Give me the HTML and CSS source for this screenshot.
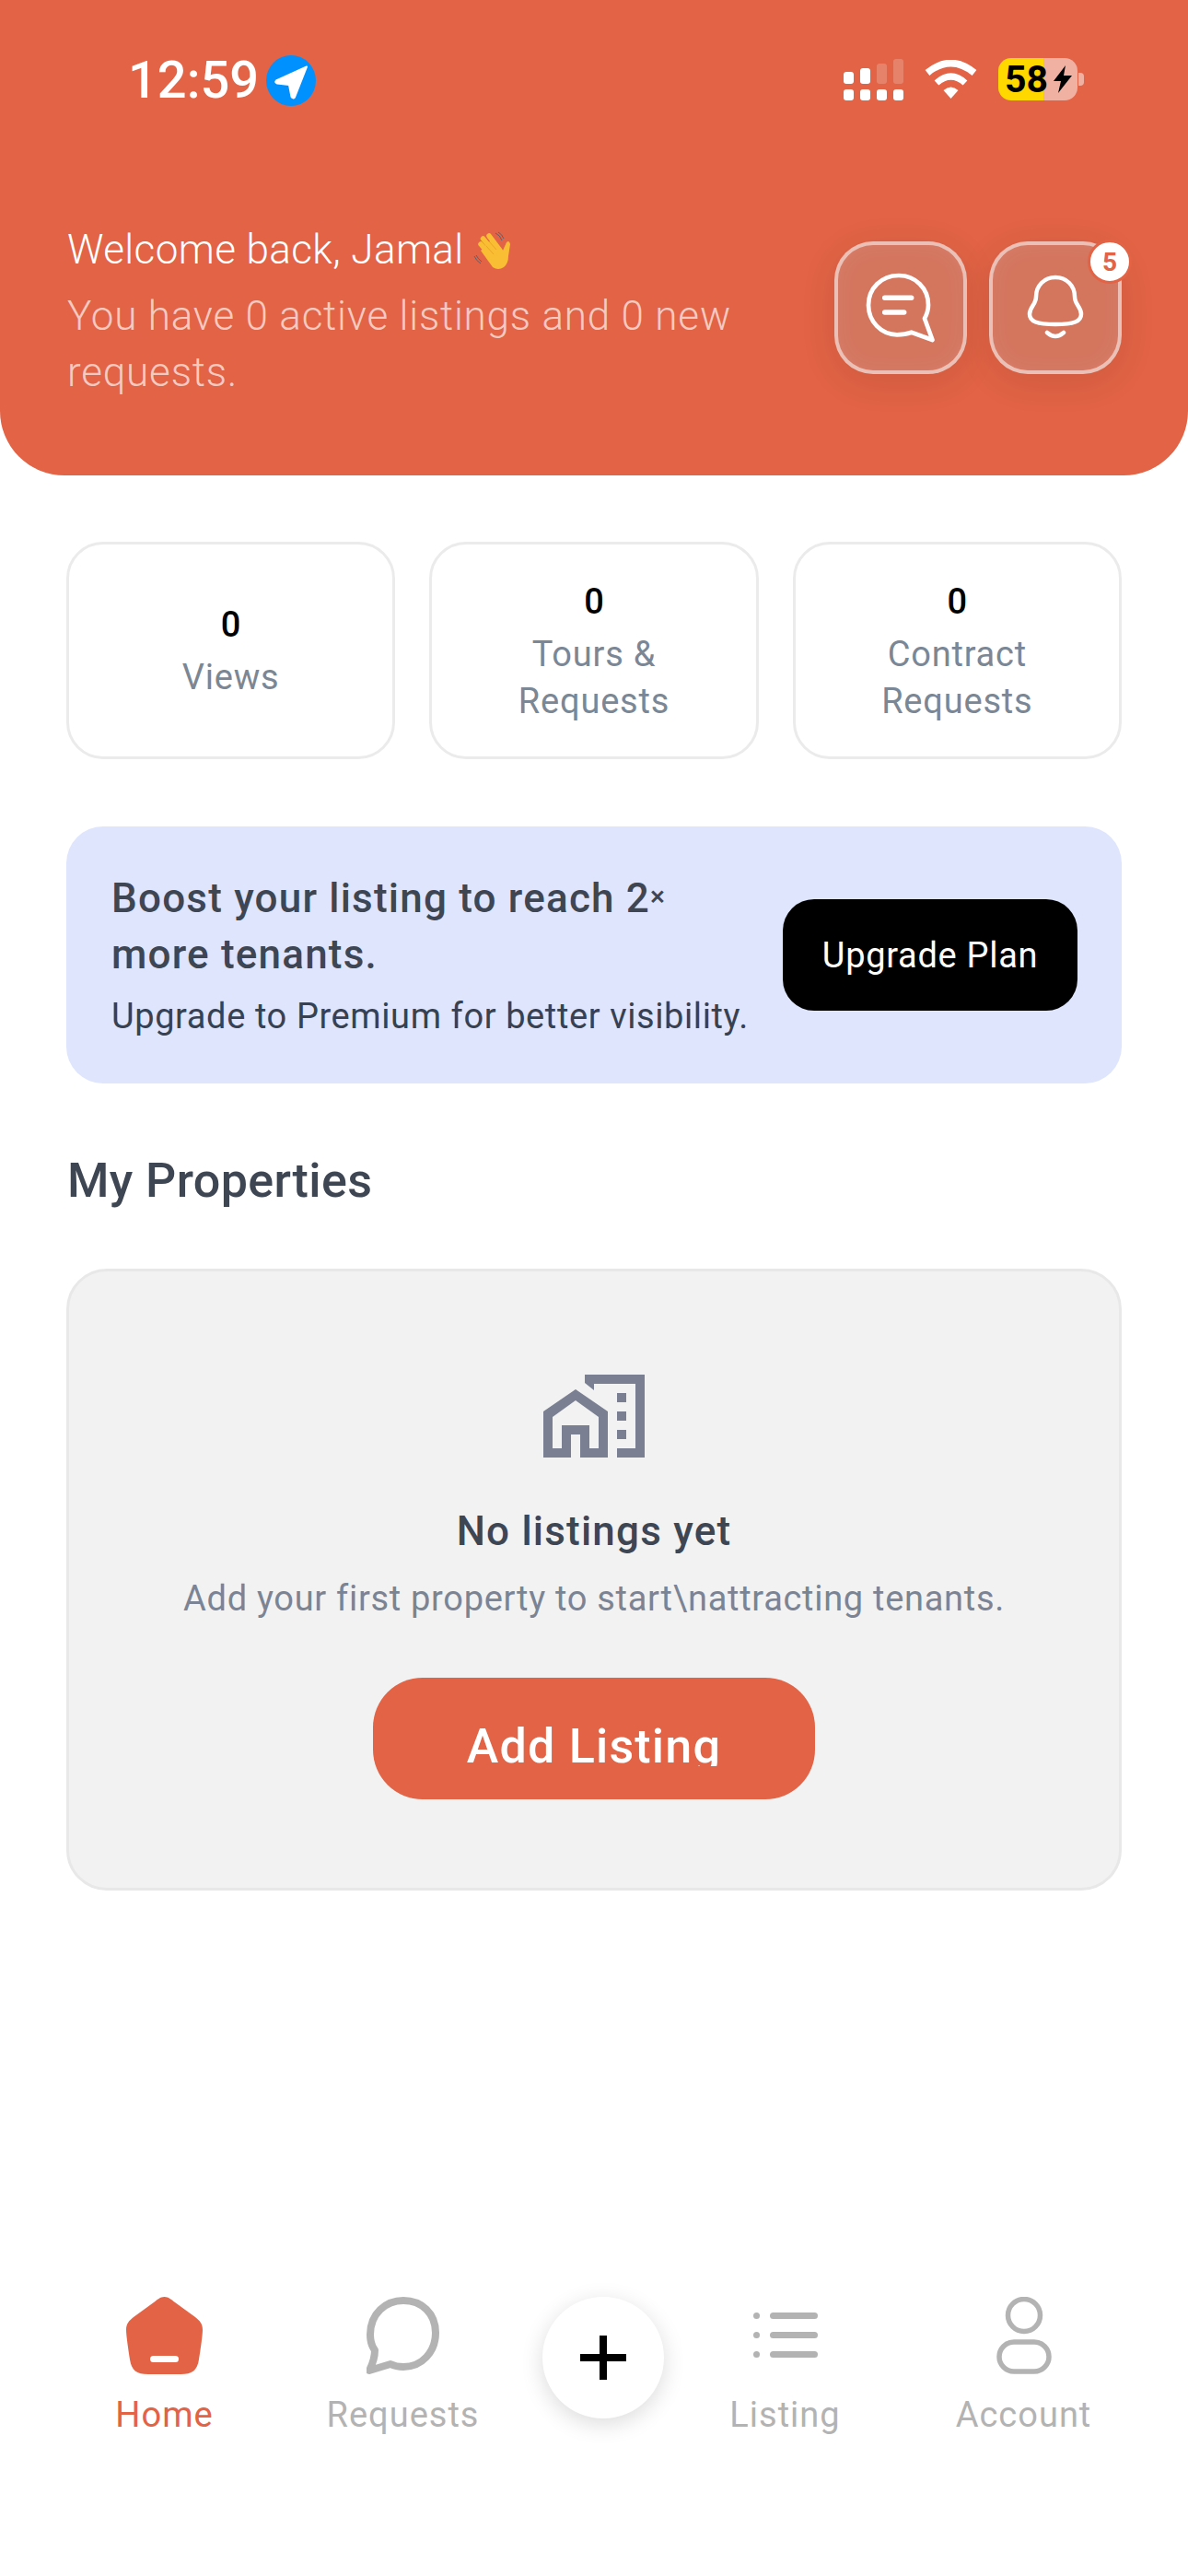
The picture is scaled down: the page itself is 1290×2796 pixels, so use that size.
FILE: index.html
```html
<!DOCTYPE html>
<html>
  <head>
    <title>Home</title>
    <link rel="stylesheet" href="styles.css">
  </head>
  <body>
    <div class="page">
      <div class="header">
        <div class="statusbar">
          <div class="status-left">
            <span class="time">12:59</span>
            <span class="location">
              <svg viewBox="0 0 54 54" width="54" height="54"><path d="M44 11.5 L11 26.5 Q9 28.5 12 29.5 L25 31 L27.5 44 Q29 46.5 31 44.5 Z" fill="#fff" stroke="#fff" stroke-width="2" stroke-linejoin="round"/></svg>
            </span>
          </div>
          <div class="status-right">
            <div class="signal">
              <span class="dot"><i class="bar b1"></i><i class="pip"></i></span>
              <span class="dot"><i class="bar b2"></i><i class="pip"></i></span>
              <span class="dot"><i class="bar b3 dim"></i><i class="pip"></i></span>
              <span class="dot"><i class="bar b4 dim"></i><i class="pip"></i></span>
            </div>
            <svg class="wifi" viewBox="0 0 57 42" width="57" height="42">
              <path d="M3 14 Q28.500 -7 54 14" fill="none" stroke="#fff" stroke-width="7.500"/>
              <path d="M13 25 Q28.500 11 44 25" fill="none" stroke="#fff" stroke-width="7"/>
              <path d="M20.500 33 Q28.500 26 36.500 33 L28.500 42 Z" fill="#fff"/>
            </svg>
            <div class="battery">
              <div class="battery-body">
                <span class="battery-text">58</span>
                <svg class="bolt" viewBox="0 0 20 30" width="20" height="30"><path d="M13 0 L0 17 L8 17 L5 30 L20 11 L11 11 Z" fill="#000"/></svg>
              </div>
              <span class="battery-nub"></span>
            </div>
          </div>
        </div>

        <div class="hero">
          <div class="hero-text">
            <div class="welcome">
              Welcome back, Jamal
              <svg class="wave" viewBox="9 9 42 42" width="42" height="42">
                <path d="M33 11 Q38 13 40 19 M36 10 Q40 12 42 17 M10 36 Q12 41 17 44 M12 35 Q14 39 18 42" stroke="#5b6270" stroke-width="1" fill="none"/>
                <path d="M17 30 L30 48 Q36 52 42 48 Q47 44 47 36 L49 23 Q48 18 45 21 L41 30 L30 17 Z" fill="#F9BE33"/>
                <path d="M17 23 L30 38 M19.500 17 L33 33 M26 14 L38 30" stroke="#F9BE33" stroke-width="5.500" stroke-linecap="round" fill="none"/>
                <path d="M23 25 L31 34 M26 20 L34 29" stroke="#E6A021" stroke-width="0.800" fill="none"/>
              </svg>
            </div>
            <p class="welcome-sub">You have 0 active listings and 0 new requests.</p>
          </div>
          <div class="hero-actions">
            <button class="glass-btn">
              <svg viewBox="0 0 76 76" width="76" height="76" fill="none" stroke="#fff" stroke-width="4.700" stroke-linejoin="round" stroke-linecap="round">
                <path d="M36 3 C17 3 3 17 3 35.300 C3 53 17 67.300 34 67.300 C40 67.300 45 66.500 49.700 64.700 L72.500 73 L64 49.700 C66.500 45 68 40 68 35 C68 17 54 3 36 3 Z"/>
                <path d="M20.700 27.300 H49.700 M20.700 43 H41.700" stroke-width="5.500"/>
              </svg>
            </button>
            <button class="glass-btn">
              <svg viewBox="0 0 62 72" width="62" height="72" fill="none" stroke="#fff" stroke-width="4.500" stroke-linecap="round" stroke-linejoin="round">
                <path d="M31 3 C19 3 10 12 10 24 C10 33 3 35 3 43 C3 51 11 54 31 54 C51 54 59 51 59 43 C59 35 52 33 52 24 C52 12 43 3 31 3 Z"/>
                <path d="M22 63 Q31 71 40 63"/>
              </svg>
              <span class="badge">5</span>
            </button>
          </div>
        </div>
      </div>

      <div class="main">
        <div class="stats">
          <div class="stat-card">
            <div class="stat-num">0</div>
            <div class="stat-label">Views</div>
          </div>
          <div class="stat-card">
            <div class="stat-num">0</div>
            <div class="stat-label">Tours &amp; Requests</div>
          </div>
          <div class="stat-card">
            <div class="stat-num">0</div>
            <div class="stat-label">Contract Requests</div>
          </div>
        </div>

        <div class="promo">
          <div class="promo-text">
            <div class="promo-title">Boost your listing to reach 2<span class="times">×</span> more tenants.</div>
            <div class="promo-sub">Upgrade to Premium for better visibility.</div>
          </div>
          <button class="upgrade-btn">Upgrade Plan</button>
        </div>

        <h2 class="section-title">My Properties</h2>

        <div class="empty-card">
          <svg class="empty-icon" viewBox="0 0 110 90" width="110" height="90" fill="#7A8092">
            <path d="M45 0 H110 V90 H80 V80 H100 V10 H55 V17 L45 9 Z"/>
            <path fill-rule="evenodd" d="M0 40 L35 16 L70 40 V90 H40 V65 H30 V90 H0 Z M10 80 H20 V55 H50 V80 H60 V46 L35 28 L10 46 Z"/>
            <path d="M80 20 H90 V30 H80 Z M80 40 H90 V50 H80 Z M80 60 H90 V70 H80 Z"/>
          </svg>
          <div class="empty-title">No listings yet</div>
          <div class="empty-sub">Add your first property to start\nattracting tenants.</div>
          <button class="add-btn"><span class="add-label">Add Listing</span></button>
        </div>
      </div>

      <div class="tabbar">
        <div class="tab active">
          <svg viewBox="0 0 83 84" width="83" height="84">
            <path d="M41.500 0 C37 0 34 3 30 6 L8 22 C3 26 0 29 0 36 C0 42 3 62 4 68 C6 80 11 84 24 84 H59 C72 84 77 80 79 68 C80 62 83 42 83 36 C83 29 80 26 75 22 L53 6 C49 3 46 0 41.500 0 Z" fill="#E26345"/>
            <rect x="26" y="64" width="31" height="7" rx="3.500" fill="#fff"/>
          </svg>
          <span>Home</span>
        </div>
        <div class="tab">
          <svg viewBox="0 0 79 84" width="79" height="84" fill="none" stroke="#B3B3B3" stroke-width="8" stroke-linejoin="round" stroke-linecap="round">
            <path d="M40 4 C21 4 4 18 4 41 C4 48 6 54 9 58 C9 65 7 72 3 80 L26 73 C30 75 35 76 40 76 C60 76 75 60 75 39 C75 18 60 4 40 4 Z"/>
          </svg>
          <span>Requests</span>
        </div>
        <div class="tab-add">
          <button class="add-circle">
            <svg viewBox="0 0 50 48" width="50" height="48"><path d="M21 0 H29 V20 H50 V28 H29 V48 H21 V28 H0 V20 H21 Z" fill="#000"/></svg>
          </button>
        </div>
        <div class="tab">
          <svg viewBox="0 0 70 84" width="70" height="84" fill="#B3B3B3">
            <circle cx="3.500" cy="20.500" r="3.500"/><circle cx="3.500" cy="41.500" r="3.500"/><circle cx="3.500" cy="62.500" r="3.500"/>
            <rect x="18" y="17" width="52" height="7" rx="3.500"/><rect x="18" y="38" width="52" height="7" rx="3.500"/><rect x="18" y="59" width="52" height="7" rx="3.500"/>
          </svg>
          <span>Listing</span>
        </div>
        <div class="tab">
          <svg viewBox="0 0 60 84" width="60" height="84" fill="none" stroke="#B3B3B3" stroke-width="5.500">
            <ellipse cx="30" cy="20" rx="17.500" ry="17.500"/>
            <rect x="3" y="49" width="54" height="32" rx="16"/>
          </svg>
          <span>Account</span>
        </div>
      </div>
    </div>
  </body>
</html>
```

FILE: styles.css
```css
* {
  box-sizing: border-box;
}
body {
  margin: 0;
  background: #fff;
  font-family: "Roboto", "Liberation Sans", sans-serif;
}
button {
  font-family: inherit;
  border: none;
  padding: 0;
}
.page {
  width: 1290px;
  height: 2796px;
  display: flex;
  flex-direction: column;
  overflow: hidden;
}

/* header */
.header {
  height: 516px;
  background-color: #e26345;
  border-radius: 0 0 70px 70px;
  padding: 60px 72px 0 73px;
}
.statusbar {
  display: flex;
  justify-content: space-between;
  align-items: flex-start;
  height: 55px;
  margin-bottom: 126px;
}
.status-left {
  display: flex;
  align-items: center;
  gap: 8px;
  padding-left: 66px;
}
.time {
  font-size: 56px;
  line-height: 55px;
  font-weight: 500;
  color: #fff;
}
.location {
  width: 54px;
  height: 55px;
  border-radius: 50%;
  background-color: #0091ff;
  display: flex;
  align-items: center;
  justify-content: center;
}
.status-right {
  display: flex;
  align-items: center;
  gap: 23px;
  margin-right: 41px;
  margin-top: 3px;
}
.signal {
  display: flex;
  gap: 7px;
  align-items: flex-end;
  height: 46px;
}
.dot {
  width: 11px;
  display: flex;
  flex-direction: column;
  gap: 6px;
}
.dot i {
  display: block;
  background: #fff;
  border-radius: 3px;
}
.pip {
  height: 12px;
}
.b1 {
  height: 13px;
}
.b2 {
  height: 17px;
}
.b3 {
  height: 22px;
}
.b4 {
  height: 27px;
}
.dot i.dim {
  background: rgba(255, 255, 255, 0.2);
}
.battery {
  display: flex;
  align-items: center;
  gap: 1px;
}
.battery-body {
  width: 86px;
  height: 46px;
  border-radius: 14px;
  background: linear-gradient(to right, #ffd800 0, #ffd800 49px, rgba(255, 255, 255, 0.5) 49px);
  display: flex;
  align-items: center;
  padding-left: 7px;
}
.battery-text {
  font-size: 41px;
  font-weight: 700;
  color: #000;
  line-height: 46px;
}
.bolt {
  margin-left: 6px;
}
.battery-nub {
  width: 6px;
  height: 14px;
  background: rgba(255, 255, 255, 0.5);
  border-radius: 0 4px 4px 0;
}
.hero {
  display: flex;
  justify-content: space-between;
}
.hero-text {
  width: 760px;
}
.welcome {
  font-size: 44px;
  line-height: 61px;
  font-weight: 300;
  letter-spacing: 0.4px;
  color: #fff;
  display: flex;
  align-items: center;
  gap: 10px;
}
.welcome-sub {
  margin: 11px 0 0;
  font-size: 44px;
  line-height: 61px;
  font-weight: 300;
  letter-spacing: 0.8px;
  color: rgba(255, 255, 255, 0.68);
}
.hero-actions {
  display: flex;
  gap: 24px;
  margin-top: 21px;
}
.glass-btn {
  position: relative;
  width: 144px;
  height: 144px;
  border-radius: 42px;
  border: 4px solid rgba(255, 255, 255, 0.55);
  background: rgba(170, 170, 170, 0.25);
  box-shadow: 0 8px 40px rgba(0, 0, 0, 0.09), inset 0 0 24px rgba(255, 255, 255, 0.08);
  display: flex;
  align-items: center;
  justify-content: center;
}
.badge {
  position: absolute;
  top: -6px;
  right: -15px;
  width: 48px;
  height: 48px;
  border-radius: 50%;
  background: #fff;
  border: 3px solid #e26345;
  color: #e26345;
  font-size: 28px;
  font-weight: 700;
  display: flex;
  align-items: center;
  justify-content: center;
}

/* main */
.main {
  flex: 1;
  padding: 72px 72px 0;
}
.stats {
  display: grid;
  grid-template-columns: repeat(3, 1fr);
  gap: 37px;
}
.stat-card {
  height: 236px;
  border: 3px solid #ebebeb;
  border-radius: 40px;
  display: flex;
  flex-direction: column;
  align-items: center;
  justify-content: center;
  text-align: center;
  padding: 3px 40px 0;
}
.stat-num {
  font-size: 38px;
  line-height: 48px;
  font-weight: 500;
  color: #000;
}
.stat-label {
  margin-top: 8px;
  font-size: 38px;
  line-height: 51px;
  letter-spacing: 0.8px;
  color: #7b8794;
}
.promo {
  margin-top: 73px;
  height: 279px;
  background: #dee5fd;
  border-radius: 40px;
  padding: 0 48px 3px 49px;
  display: flex;
  align-items: center;
  justify-content: space-between;
}
.promo-text {
  width: 700px;
}
.promo-title {
  max-width: 640px;
  font-size: 44px;
  line-height: 61px;
  font-weight: 500;
  letter-spacing: 1.2px;
  color: #3f4653;
}
.times {
  font-size: 30px;
  vertical-align: 7px;
}
.promo-sub {
  font-size: 38px;
  line-height: 50px;
  margin-top: 11px;
  letter-spacing: 0.6px;
  color: #374151;
}
.upgrade-btn {
  width: 320px;
  height: 121px;
  margin-top: 3px;
  border-radius: 34px;
  background: #000;
  color: #fff;
  font-size: 38px;
  letter-spacing: 0.7px;
}
.section-title {
  margin: 73px 0 0;
  font-size: 52px;
  line-height: 66px;
  font-weight: 500;
  letter-spacing: 0.4px;
  color: #3f4653;
  padding-left: 1px;
}
.empty-card {
  margin-top: 62px;
  height: 675px;
  background: #f2f2f2;
  border: 3px solid #e8e8e8;
  border-radius: 44px;
  display: flex;
  flex-direction: column;
  align-items: center;
  padding-top: 112px;
}
.empty-title {
  margin-top: 52px;
  font-size: 44px;
  line-height: 56px;
  font-weight: 500;
  letter-spacing: 1.2px;
  color: #3f4653;
}
.empty-sub {
  margin-top: 20px;
  font-size: 38px;
  line-height: 50px;
  letter-spacing: 0.7px;
  color: #7b8494;
}
.add-btn {
  margin-top: 61px;
  width: 480px;
  height: 132px;
  border-radius: 54px;
  background: #e26345;
  color: #fff;
  display: flex;
  justify-content: center;
  align-items: flex-start;
  padding-top: 53px;
}
.add-label {
  display: block;
  font-size: 52px;
  line-height: 44px;
  height: 43px;
  overflow: hidden;
  font-weight: 500;
  letter-spacing: 1.2px;
}

/* tabs */
.tabbar {
  display: grid;
  grid-template-columns: 259px 259px 1fr 259px 259px;
  padding: 0 49px;
  height: 303px;
}
.tab {
  display: flex;
  flex-direction: column;
  align-items: center;
  gap: 19px;
  font-size: 38px;
  line-height: 50px;
  letter-spacing: 1px;
  color: #b3b3b3;
}
.tab.active {
  color: #e26345;
}
.tab-add {
  display: flex;
  justify-content: center;
  padding-left: 20px;
}
.add-circle {
  width: 132px;
  height: 132px;
  flex: none;
  border-radius: 50%;
  background: #fff;
  box-shadow: 0 6px 24px rgba(0, 0, 0, 0.14);
  display: flex;
  align-items: center;
  justify-content: center;
}
```
